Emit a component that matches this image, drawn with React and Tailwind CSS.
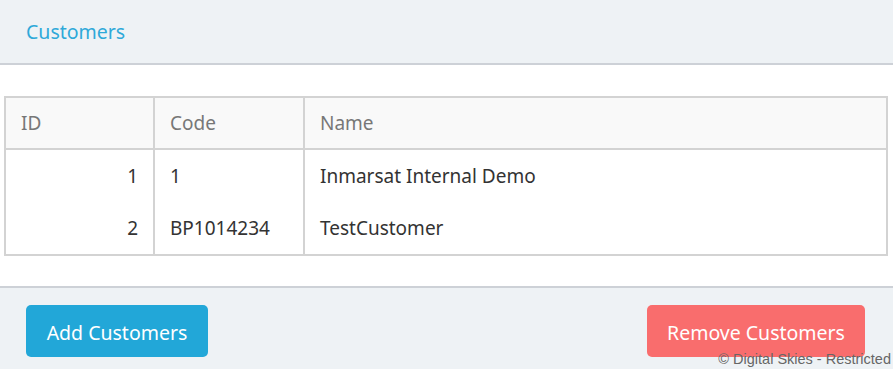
const ROWS = [
  { id: 1, code: '1', name: 'Inmarsat Internal Demo' },
  { id: 2, code: 'BP1014234', name: 'TestCustomer' },
]

export default function App() {
  return (
    <div className="relative w-[893px] h-[369px] overflow-hidden bg-white text-[19px]" style={{ fontFamily: '"Noto Sans", sans-serif' }}>
      <div className="h-[65px] bg-[#eef2f5] border-b-2 border-[#cdd1d7] flex items-center px-[26px]">
        <span className="text-[#2fa9d9] text-[19.5px]">Customers</span>
      </div>
      <div className="h-[221px] pt-[31px] px-[4px]">
        <table className="w-[884px] border-collapse border-2 border-[#d3d3d3]">
          <thead>
            <tr className="bg-[#f9f9f9] text-[#777] h-[52px]">
              <th className="w-[149px] border-2 border-[#d3d3d3] text-left font-normal px-[15px]">ID</th>
              <th className="w-[150px] border-2 border-[#d3d3d3] text-left font-normal px-[15px]">Code</th>
              <th className="border-2 border-[#d3d3d3] text-left font-normal px-[15px]">Name</th>
            </tr>
          </thead>
          <tbody className="text-[#333]">
            {ROWS.map((r) => (
              <tr key={r.id} className="h-[53px]">
                <td className="border-x-2 border-[#d3d3d3] text-right px-[15px]">{r.id}</td>
                <td className="border-x-2 border-[#d3d3d3] px-[15px]">{r.code}</td>
                <td className="border-x-2 border-[#d3d3d3] px-[15px]">{r.name}</td>
              </tr>
            ))}
          </tbody>
        </table>
      </div>
      <div className="h-[83px] bg-[#eef2f5] border-t-2 border-[#cdd1d7] flex justify-between items-start pt-[17px] pl-[26px] pr-[28px]">
        <button className="w-[182px] h-[52px] pt-[3px] rounded-[5px] bg-[#22a7d8] text-white text-[19.5px]">Add Customers</button>
        <button className="w-[218px] h-[52px] pt-[3px] rounded-[5px] bg-[#f96d6d] text-white text-[19.5px]">Remove Customers</button>
      </div>
      <div className="absolute right-[2px] bottom-[3px] text-[14.5px] leading-none text-[#666]" style={{ fontFamily: '"Liberation Sans", Arial, sans-serif' }}>
        © Digital Skies - Restricted
      </div>
    </div>
  )
}
